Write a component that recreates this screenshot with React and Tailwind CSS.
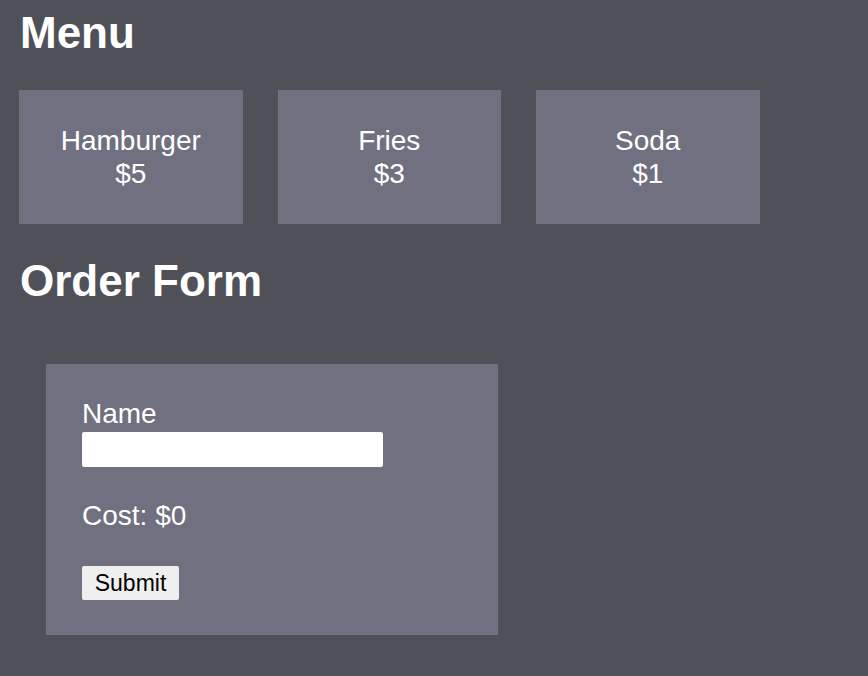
import React from "react";

const items = [
  { name: "Hamburger", price: 5 },
  { name: "Fries", price: 3 },
  { name: "Soda", price: 1 },
];

export default function App() {
  return (
    <div
      className="min-h-[676px] bg-[#505059] px-[20px] text-white"
      style={{ fontFamily: '"Liberation Sans", Arial, sans-serif' }}
    >
      <h1 className="pt-[8px] text-[44px] font-bold leading-[50px]">Menu</h1>
      <div className="-ml-px mt-[32px] flex gap-[35px]">
        {items.map((it) => (
          <div
            key={it.name}
            className="flex h-[134px] w-[223.5px] flex-col items-center justify-center bg-[#707081] pb-[1px] text-[28px] leading-[33px]"
          >
            <div>{it.name}</div>
            <div>${it.price}</div>
          </div>
        ))}
      </div>
      <h1 className="mt-[32px] text-[44px] font-bold leading-[50px]">Order Form</h1>
      <form
        className="ml-[26px] mt-[58px] h-[271px] w-[452px] bg-[#707081] px-[36px] pt-[34px]"
        onSubmit={(e) => e.preventDefault()}
      >
        <label className="block text-[28px] leading-[32px]">Name</label>
        <input
          type="text"
          className="mt-[2px] block h-[35px] w-[301px] rounded-[2px] bg-white text-black outline-none"
        />
        <div className="mt-[33px] text-[28px] leading-[32px]">Cost: $0</div>
        <button
          type="submit"
          className="mt-[34px] block h-[34px] w-[97px] rounded-[2px] bg-[#efefef] text-[23px] leading-[34px] text-black"
        >
          Submit
        </button>
      </form>
    </div>
  );
}
